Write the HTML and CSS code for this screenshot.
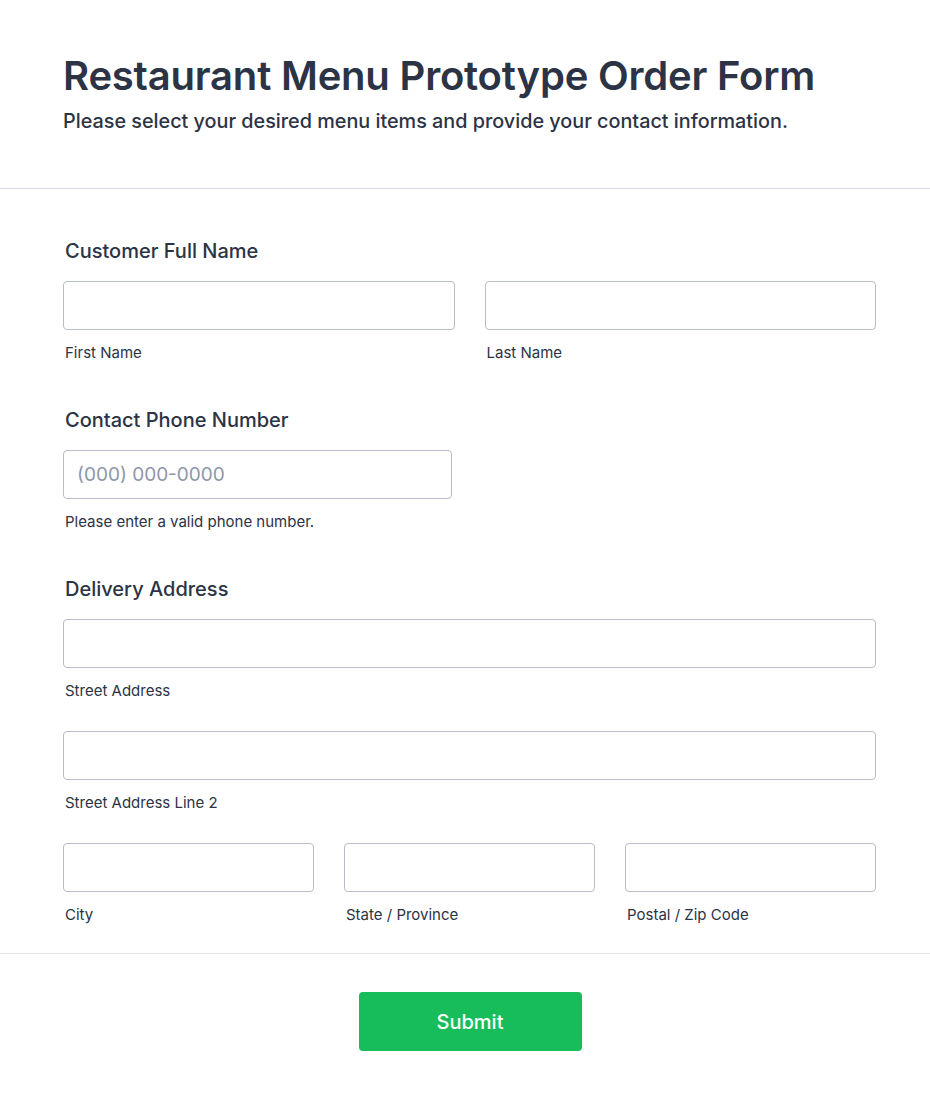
FILE: index.html
```html
<!DOCTYPE html>
<html lang="en">
  <head>
    <meta charset="UTF-8" />
    <meta name="viewport" content="width=device-width, initial-scale=1.0" />
    <title>Restaurant Menu Prototype Order Form</title>
    <link rel="stylesheet" href="styles.css">
  </head>
  <body>

    <div class="form-header">
      <h1>Restaurant Menu Prototype Order Form</h1>
      <p class="subtitle">Please select your desired menu items and provide your contact information.</p>
    </div>

    <form class="form-body">

      <div class="field">
        <label class="field-label">Customer Full Name</label>
        <div class="row two">
          <div class="sub">
            <input type="text" />
            <span class="sub-label">First Name</span>
          </div>
          <div class="sub">
            <input type="text" />
            <span class="sub-label">Last Name</span>
          </div>
        </div>
      </div>

      <div class="field">
        <label class="field-label">Contact Phone Number</label>
        <div class="sub phone">
          <input type="tel" placeholder="(000) 000-0000" />
          <span class="sub-label">Please enter a valid phone number.</span>
        </div>
      </div>

      <div class="field">
        <label class="field-label">Delivery Address</label>
        <div class="sub">
          <input type="text" />
          <span class="sub-label">Street Address</span>
        </div>
        <div class="sub">
          <input type="text" />
          <span class="sub-label">Street Address Line 2</span>
        </div>
        <div class="row three">
          <div class="sub">
            <input type="text" />
            <span class="sub-label">City</span>
          </div>
          <div class="sub">
            <input type="text" />
            <span class="sub-label">State / Province</span>
          </div>
          <div class="sub">
            <input type="text" />
            <span class="sub-label">Postal / Zip Code</span>
          </div>
        </div>
      </div>

    </form>

    <div class="form-footer">
      <button type="button" class="submit-btn">Submit</button>
    </div>

  </body>
</html>
```

FILE: styles.css
```css
*{
  margin: 0;
  padding: 0;
  box-sizing: border-box;
}

body{
  font-family: Inter, "Noto Sans", sans-serif;
  color: #2c3345;
  background: #fff;
}

.form-header{
  padding: 52px 54px 0 63px;
  height: 189px;
  border-bottom: 1px solid #dadee6;
}

h1{
  font-size: 40px;
  font-weight: 600;
  line-height: 48px;
  letter-spacing: -0.2px;
}

.subtitle{
  font-size: 19.8px;
  font-weight: 500;
  line-height: 24px;
  margin-top: 9px;
}

.form-body{
  padding: 50px 54px 0 63px;
  height: 765px;
  border-bottom: 1px solid #e3e6ec;
}

.field{
  margin-bottom: 46px;
}

.field-label{
  display: block;
  font-size: 20px;
  font-weight: 500;
  line-height: 24px;
  margin-left: 2px;
  margin-bottom: 18px;
}

.row{
  display: grid;
  column-gap: 30px;
}

.row.two{
  grid-template-columns: 1fr 1fr;
}

.row.three{
  grid-template-columns: 1fr 1fr 1fr;
}

.sub{
  display: flex;
  flex-direction: column;
}

.field > .sub + .sub,
.field > .sub + .row{
  margin-top: 31px;
}

.phone{
  width: 389px;
}

input{
  height: 49px;
  width: 100%;
  border: 1px solid #b8bdc9;
  border-radius: 4px;
  padding: 0 13px;
  font-family: Inter, "Noto Sans", sans-serif;
  font-size: 19px;
  color: #2c3345;
}

input::placeholder{
  color: #8d96ab;
}

.sub-label{
  font-size: 15px;
  line-height: 18px;
  margin-top: 14px;
  margin-left: 2px;
  color: #2c3345;
}

.form-footer{
  display: flex;
  justify-content: center;
  padding: 38px 0 0 10px;
}

.submit-btn{
  width: 223px;
  height: 59px;
  border: none;
  border-radius: 4px;
  background-color: #18bd5b;
  color: #fff;
  font-family: Inter, "Noto Sans", sans-serif;
  font-size: 20px;
  font-weight: 500;
  cursor: pointer;
}
```
